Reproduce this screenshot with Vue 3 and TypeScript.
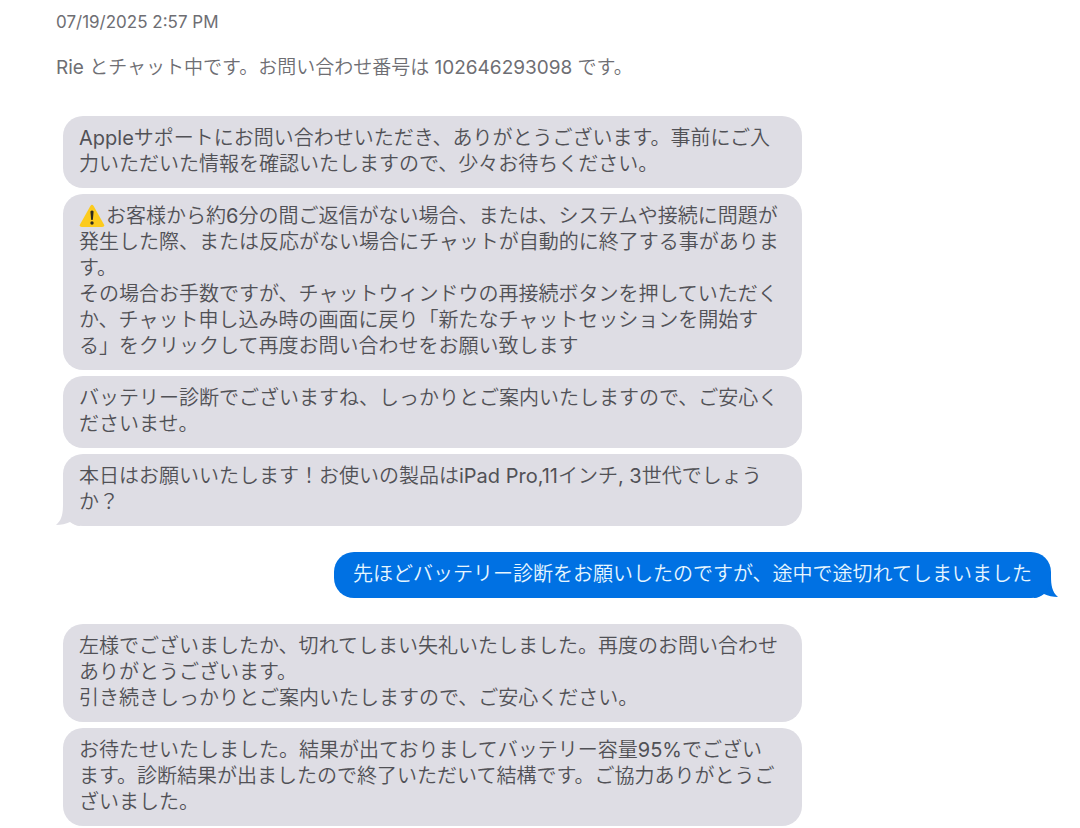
<script setup lang="ts">
interface Message {
  id: number
  lines: string[]
  warning?: boolean
  tail?: boolean
}

interface Turn {
  id: number
  from: 'agent' | 'customer'
  messages: Message[]
}

const timestamp = '07/19/2025 2:57 PM'
const status = 'Rie とチャット中です。お問い合わせ番号は 102646293098 です。'

const turns: Turn[] = [
  {
    id: 1,
    from: 'agent',
    messages: [
      {
        id: 1,
        lines: [
          'Appleサポートにお問い合わせいただき、ありがとうございます。事前にご入',
          '力いただいた情報を確認いたしますので、少々お待ちください。',
        ],
      },
      {
        id: 2,
        warning: true,
        lines: [
          'お客様から約6分の間ご返信がない場合、または、システムや接続に問題が',
          '発生した際、または反応がない場合にチャットが自動的に終了する事がありま',
          'す。',
          'その場合お手数ですが、チャットウィンドウの再接続ボタンを押していただく',
          'か、チャット申し込み時の画面に戻り「新たなチャットセッションを開始す',
          'る」をクリックして再度お問い合わせをお願い致します',
        ],
      },
      {
        id: 3,
        lines: [
          'バッテリー診断でございますね、しっかりとご案内いたしますので、ご安心く',
          'ださいませ。',
        ],
      },
      {
        id: 4,
        tail: true,
        lines: ['本日はお願いいたします！お使いの製品はiPad Pro,11インチ, 3世代でしょう', 'か？'],
      },
    ],
  },
  {
    id: 2,
    from: 'customer',
    messages: [
      { id: 5, tail: true, lines: ['先ほどバッテリー診断をお願いしたのですが、途中で途切れてしまいました'] },
    ],
  },
  {
    id: 3,
    from: 'agent',
    messages: [
      {
        id: 6,
        lines: [
          '左様でございましたか、切れてしまい失礼いたしました。再度のお問い合わせ',
          'ありがとうございます。',
          '引き続きしっかりとご案内いたしますので、ご安心ください。',
        ],
      },
      {
        id: 7,
        lines: [
          'お待たせいたしました。結果が出ておりましてバッテリー容量95%でござい',
          'ます。診断結果が出ましたので終了いただいて結構です。ご協力ありがとうご',
          'ざいました。',
        ],
      },
    ],
  },
]
</script>

<template>
  <main class="chat">
    <header class="intro">
      <p class="time">{{ timestamp }}</p>
      <p class="status">{{ status }}</p>
    </header>
    <section class="turns">
      <div v-for="turn in turns" :key="turn.id" class="turn" :class="turn.from">
        <article v-for="message in turn.messages" :key="message.id" class="bubble">
          <p class="text"><svg v-if="message.warning" class="warning" viewBox="0 0 26 24" role="img" aria-label="警告"><path d="M11.4 2 Q13 -.6 14.6 2 L25 20.4 Q26 23 23.2 23 H2.8 Q0 23 1 20.4Z" fill="#fccb1d" /><path d="M11.4 7.4 Q13 5.8 14.6 7.4 L13.9 15.6 Q13 16.6 12.1 15.6Z" fill="#2d2a20" /><circle cx="13" cy="19" r="1.7" fill="#2d2a20" /></svg>{{ message.lines.join('\n') }}</p>
          <svg v-if="message.tail" class="tail" viewBox="0 0 24 22" aria-hidden="true">
            <path d="M7 0C7 9 6 16 0 21C5 21 10 20 14 18C17 20 20 22 24 22V0Z" fill="currentColor" />
          </svg>
        </article>
      </div>
    </section>
  </main>
</template>

<style>
body {
  margin: 0;
  background: #fff;
}
</style>

<style scoped>
.chat {
  box-sizing: border-box;
  padding: 8px 29px 2px 56px;
  font-family: Inter, "Noto Sans CJK JP DemiLight", "Noto Sans CJK JP", sans-serif;
}

p {
  margin: 0;
}

.intro {
  color: #6e6e73;
  line-height: 28px;
}

.time {
  font-size: 17px;
}

.status {
  margin-top: 18px;
  font-size: 19px;
}

.turns {
  display: flex;
  flex-direction: column;
  gap: 26px;
  margin: 34px 0 0 7px;
}

.turn {
  display: flex;
  flex-direction: column;
  align-items: flex-start;
  gap: 6px;
}

.bubble {
  position: relative;
  box-sizing: border-box;
  width: 75%;
  max-width: 739px;
  padding: 9px 16px 11px;
  border-radius: 20px;
  background: #dedde4;
}

.text {
  color: #515156;
  font-size: 20px;
  line-height: 26px;
  white-space: pre-wrap;
}

.warning {
  width: 26px;
  height: 24px;
  margin: -4px 1px 0 0;
  vertical-align: -5px;
}

.tail {
  position: absolute;
  bottom: 0;
  left: -7px;
  z-index: -1;
  width: 24px;
  height: 22px;
  color: #dedde4;
}

.customer {
  align-items: flex-end;
}

.customer .bubble {
  width: auto;
  max-width: 100%;
  padding-right: 19px;
  padding-left: 19px;
  background: #0071e3;
}

.customer .text {
  color: #e6f6ff;
}

.customer .tail {
  right: -7px;
  left: auto;
  color: #0071e3;
  transform: scaleX(-1);
}
</style>
